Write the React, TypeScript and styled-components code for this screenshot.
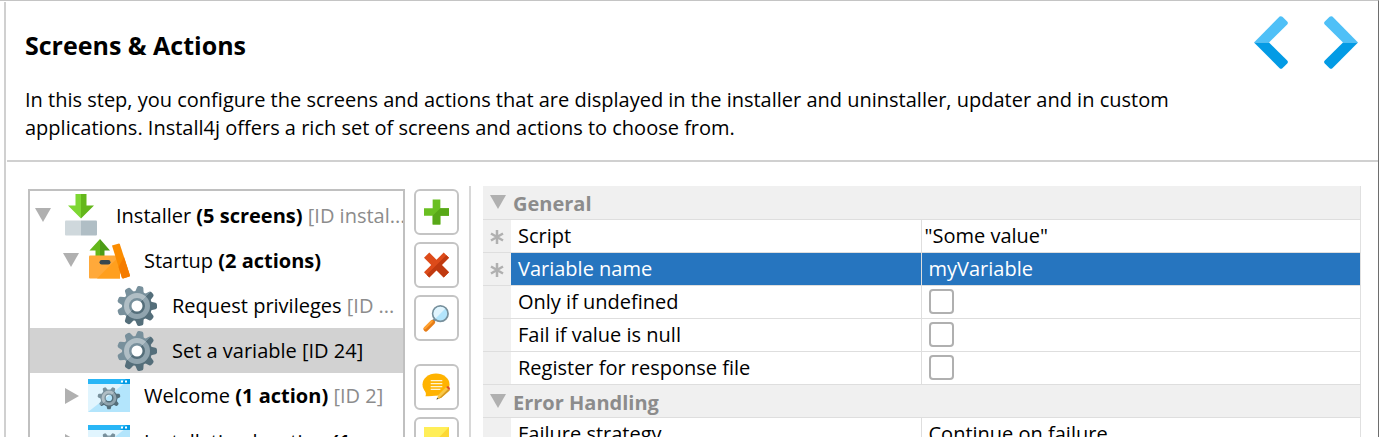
import React from 'react';
import styled, { createGlobalStyle, css } from 'styled-components';

const Global = createGlobalStyle`
  *, *::before, *::after { box-sizing: border-box; }
  body { margin: 0; background: #fff; color: #000; font: 20px/28px "Open Sans", "Segoe UI", sans-serif; }
  button { font: inherit; color: inherit; padding: 0; cursor: pointer; }
`;

const Window = styled.div`
  display: flex;
  flex-direction: column;
  height: 100vh;
  overflow: hidden;
  border-top: 1px solid #c4c4c4;
  border-right: 1px solid #6e6e6e;
  padding-left: 4px;
`;
const Content = styled.main`
  flex: 1;
  min-height: 0;
  display: flex;
  flex-direction: column;
  margin-top: 1px;
  border-left: 2px solid #d0d0d0;
`;
const Header = styled.header`
  display: flex;
  justify-content: space-between;
  align-items: flex-start;
  height: 160px;
  margin-left: 1px;
  padding: 14px 20px 0 18px;
  border-bottom: 2px solid #d0d0d0;
`;
const Intro = styled.div`
  flex: 0 1 1160px;
`;
const Title = styled.h1`
  margin: 15px 0 27px;
  font-size: 25px;
  line-height: 28px;
  font-weight: 700;
`;
const Lead = styled.p`
  margin: 0;
`;
const Steps = styled.nav`
  display: flex;
  gap: 36px;
`;
const StepButton = styled.button`
  display: block;
  height: 54px;
  border: 0;
  background: none;
  svg { display: block; }
`;
const Body = styled.div`
  flex: 1;
  min-height: 0;
  display: flex;
  padding: 24px 17px 0 22px;
`;
const Tree = styled.ul`
  flex: 0 0 377px;
  min-width: 0;
  height: 600px;
  margin: 3px 0 0;
  padding: 2px 0 0;
  list-style: none;
  overflow: hidden;
  border: 2px solid #c0c0c0;
`;
const TreeRow = styled.li<{ $level: number; $selected?: boolean; $screen?: boolean }>`
  display: flex;
  align-items: center;
  height: ${p => (p.$screen ? 46 : 45)}px;
  padding-left: ${p => 4 + p.$level * 28}px;
  white-space: nowrap;
  background: ${p => (p.$selected ? '#d2d2d2' : 'transparent')};
`;
const Toggle = styled.span`
  flex: 0 0 18px;
  height: 18px;
  svg { display: block; }
`;
const NodeIcon = styled.span`
  flex: 0 0 42px;
  height: 42px;
  margin: 0 14px 0 8px;
  svg { display: block; overflow: visible; }
`;
const NodeLabel = styled.span`
  flex: none;
`;
const NodeId = styled.span<{ $strong?: boolean }>`
  color: ${p => (p.$strong ? '#000' : '#8c8c8c')};
`;
const Tools = styled.div`
  flex: 0 0 45px;
  display: flex;
  flex-direction: column;
  gap: 7px;
  margin: 3px 10px 0 9px;
`;
const ToolButton = styled.button<{ $apart?: boolean }>`
  display: grid;
  place-items: center;
  flex: none;
  height: 46px;
  margin-top: ${p => (p.$apart ? 16 : 0)}px;
  background: #fff;
  border: 2px solid #c4c4c4;
  border-radius: 6px;
`;
const Properties = styled.section`
  flex: 1;
  min-width: 0;
  height: 600px;
  padding-left: 12px;
  border-left: 2px solid #d8d8d8;
`;
const Grid = styled.table`
  width: 100%;
  border-collapse: collapse;
  table-layout: fixed;
  border-right: 1px solid #e0e0e0;
`;
const MarkColumn = styled.col`
  width: 28px;
`;
const NameColumn = styled.col`
  width: 410px;
`;
const cell = css`
  height: 33px;
  padding: 0 7px;
  border-bottom: 1px solid #dedede;
  text-align: left;
  font-weight: 400;
  white-space: nowrap;
  line-height: 28px;
`;
const GroupCell = styled.th`
  ${cell}
  padding-left: 6px;
  background: #f0f0f0;
  color: #8c8c8c;
`;
const GroupTitle = styled.span`
  display: flex;
  gap: 6px;
  padding-top: 4px;
  font-weight: 700;
  svg { display: block; margin-top: 4px; }
`;
const MarkCell = styled.td`
  ${cell}
  background: #f0f0f0;
  svg { display: block; margin-top: 2px; }
`;
const NameCell = styled.th<{ $selected?: boolean }>`
  ${cell}
  border-right: 1px solid #dedede;
  ${p => p.$selected && css`background: #2675bf; color: #fff;`}
`;
const ValueCell = styled.td<{ $selected?: boolean; $code?: boolean }>`
  ${cell}
  padding-left: ${p => (p.$code ? 3 : 7)}px;
  ${p => p.$selected && css`background: #2675bf; color: #fff;`}
`;
const Check = styled.input`
  appearance: none;
  display: block;
  width: 25px;
  height: 25px;
  margin: 0;
  background: #fff;
  border: 2px solid #b0b0b0;
  border-radius: 4px;
`;

const Chevron = ({ next }: { next?: boolean }) => (
  <svg width="34" height="54" viewBox="0 0 34 54">
    <g transform={next ? 'translate(34 0) scale(-1 1)' : undefined}>
      <path fill="#4fc0f7" d="M0 26.500 25.600.6Q27 -.4 28.400.8L33.200 5.600Q34.600 7 33.200 8.400L15 26.600Z" />
      <path fill="#039be5" d="M0 26.500H15L33.200 44.600Q34.600 46 33.200 47.400L28.400 52.200Q27 53.400 25.600 52.200Z" />
    </g>
  </svg>
);

const Triangle = ({ open }: { open?: boolean }) => (
  <svg width="18" height="18" viewBox="0 0 18 18">
    <path fill="#b0b0b0" d={open ? 'M1 1H17L9 15Z' : 'M3 1 17 9 3 17Z'} />
  </svg>
);

const GearShape = ({ id, teeth = 9, offset = 10 }: { id: string; teeth?: number; offset?: number }) => (
  <>
    <defs>
      <linearGradient id={id} x1="0" y1="0" x2="42" y2="42" gradientUnits="userSpaceOnUse">
        <stop offset=".5" stopColor="#78909c" />
        <stop offset=".5" stopColor="#546e7a" />
      </linearGradient>
      <linearGradient id={id + 'r'} x1="0" y1="0" x2="42" y2="42" gradientUnits="userSpaceOnUse">
        <stop offset=".5" stopColor="#b0bec5" />
        <stop offset=".5" stopColor="#90a4ae" />
      </linearGradient>
      <mask id={id + 'm'}>
        <g fill="#fff">
          <circle cx="21" cy="21" r="15" />
          {Array.from({ length: teeth }, (_, i) => (
            <path
              key={i}
              d="M16.500 8 17.800 2.500Q18.200 1 19.800 1H22.200Q23.800 1 24.200 2.500L25.500 8Z"
              transform={`rotate(${offset + (i * 360) / teeth} 21 21)`}
            />
          ))}
        </g>
        <circle cx="21" cy="21" r="5.500" fill="#000" />
      </mask>
    </defs>
    <g mask={`url(#${id}m)`}>
      <rect width="42" height="42" fill={`url(#${id})`} />
      <circle cx="21" cy="21" r="10.500" fill="none" stroke={`url(#${id}r)`} strokeWidth="5" />
    </g>
  </>
);

const GearIcon = ({ id }: { id: string }) => (
  <svg width="42" height="42" viewBox="0 0 42 42">
    <circle cx="21" cy="21" r="7" fill="#fff" />
    <GearShape id={id} />
  </svg>
);

const InstallerIcon = () => (
  <svg width="42" height="42" viewBox="0 0 42 42">
    <path fill="#7ed733" d="M15.500 -1H21V23.500L8 10.500H15.500Z" />
    <path fill="#64b71b" d="M21 -1H26.500V10.500H34L21 23.500Z" />
    <path fill="#cfd8dc" d="M6 25.500H21V40.500H6Q5 40.500 5 39.500V26.500Q5 25.500 6 25.500Z" />
    <path fill="#b0bec5" d="M21 25.500H36Q37 25.500 37 26.500V39.500Q37 40.500 36 40.500H21Z" />
  </svg>
);

const StartupIcon = () => (
  <svg width="42" height="42" viewBox="0 0 42 42">
    <path fill="#64b71b" d="M12 -1 1.500 10.500H7.500V17H12Z" />
    <path fill="#4c9c17" d="M12 -1 22 10.500H16.500V17H12Z" />
    <path fill="#ffa93a" d="M2 15.500H32V38.500H2Q1 38.500 1 37.500V16.500Q1 15.500 2 15.500Z" />
    <path fill="#ff9f1e" d="M32 15.500V38.500H9Z" />
    <rect x="11.500" y="20" width="11" height="4.500" rx="2.200" fill="#37474f" />
    <path fill="#fb8c00" d="M24 5.500 31 3.500Q31.500 3.500 31.800 4L42 35.500 41.500 36.500 35 38.500 34 38Z" />
    <path fill="#f57c00" d="M36 17 42 35.500 41.500 36.500 35 38.500 34 38 30.500 27Z" />
  </svg>
);

const ScreenIcon = ({ id }: { id: string }) => (
  <svg width="42" height="42" viewBox="0 0 42 42">
    <path fill="#e1f5fe" d="M0 4H42V37H0Z" />
    <path fill="#b3e5fc" d="M42 4V37H0Z" />
    <path fill="#29b6f6" d="M0 4H42V9H0Z" />
    <path fill="#039be5" d="M38 4H42V9H32Z" />
    <path fill="#fff" d="M33 5.500H35V7.500H33ZM37 5.500H39V7.500H37Z" />
    <g transform="translate(9 11) scale(.57)"><GearShape id={id} teeth={7} offset={180} /></g>
  </svg>
);

const PlusIcon = () => (
  <svg width="25" height="26" viewBox="0 0 26 26">
    <path fill="#6abf22" d="M9 0H17V9H26V17H17V26H9V17H0V9H9Z" />
    <path fill="#58a818" d="M17 9H26V17H17V26H9V17Z" />
  </svg>
);
const DeleteIcon = () => (
  <svg width="25" height="26" viewBox="0 0 26 26">
    <path fill="#dd4b1a" d="M5.500 0 13 7.500 20.500 0 26 5.500 18.500 13 26 20.500 20.500 26 13 18.500 5.500 26 0 20.500 7.500 13 0 5.500Z" />
    <path fill="#c03a10" d="M26 5.500 18.500 13 26 20.500 20.500 26 13 18.500 5.500 26 2.800 23.200 23.200 2.800Z" />
  </svg>
);
const SearchIcon = () => (
  <svg width="27" height="28" viewBox="0 0 28 28">
    <path d="M10 18 13 15" stroke="#78909c" strokeWidth="3" />
    <path d="M3 25.500 10 18.500" stroke="#e67c17" strokeWidth="5" strokeLinecap="round" />
    <path d="M2 24.500 9 17.500" stroke="#ffa030" strokeWidth="2.500" strokeLinecap="round" />
    <circle cx="18" cy="9.500" r="8" fill="#b3e5fc" stroke="#78909c" strokeWidth="1.800" />
    <path fill="#e1f5fe" d="M13 14.500A7 7 0 0 1 23 4.500Z" />
  </svg>
);
const CommentIcon = () => (
  <svg width="29" height="30" viewBox="0 0 30 30">
    <ellipse cx="14.500" cy="12.500" rx="14" ry="11.500" fill="#ffb300" />
    <path fill="#ffb300" d="M2.500 18Q5 22 3.500 24.500 10 25 14 23.500Z" />
    <path d="M9 8.500H21M9 11.500H21M9 14.500H21M9 17.500H19" stroke="#fff3cf" strokeWidth="1.300" />
    <path fill="#f9c846" d="M15 28 17 23 25 15 28.500 18.500 20 26Z" />
    <path fill="#d99a20" d="M18 26 27 17 28.500 18.500 20 26 15 28Z" />
    <path fill="#dd4b2a" d="M25 15 27 14 29 16 28.500 18.500Z" />
    <path fill="#37474f" d="M15 28 15.700 26 17 27.200Z" />
  </svg>
);
const NoteIcon = () => (
  <svg width="25" height="26" viewBox="0 0 25 26">
    <path fill="#ffee58" d="M0 0H25V26H0Z" />
    <path fill="#fdd835" d="M25 0V26H0Z" />
  </svg>
);
const Asterisk = () => (
  <svg width="14" height="14" viewBox="0 0 14 14">
    <path d="M7 0V14M1 3.500 13 10.500M13 3.500 1 10.500" stroke="#b0b0b0" strokeWidth="2.500" />
  </svg>
);

type Prop = { name: string; value?: string; marked?: boolean; selected?: boolean; code?: boolean };
const general: Prop[] = [
  { name: 'Script', value: '"Some value"', marked: true, code: true },
  { name: 'Variable name', value: 'myVariable', marked: true, selected: true },
  { name: 'Only if undefined' },
  { name: 'Fail if value is null' },
  { name: 'Register for response file' },
];
const errors: Prop[] = [{ name: 'Failure strategy', value: 'Continue on failure' }];

const Group = ({ title, items }: { title: string; items: Prop[] }) => (
  <tbody>
    <tr>
      <GroupCell colSpan={3} scope="rowgroup">
        <GroupTitle><Triangle open />{title}</GroupTitle>
      </GroupCell>
    </tr>
    {items.map(p => {
      const id = p.name.toLowerCase().replace(/ /g, '-');
      return (
        <tr key={id}>
          <MarkCell>{p.marked && <Asterisk />}</MarkCell>
          <NameCell scope="row" $selected={p.selected}>
            {p.value ? p.name : <label htmlFor={id}>{p.name}</label>}
          </NameCell>
          <ValueCell $selected={p.selected} $code={p.code}>
            {p.value ?? <Check type="checkbox" id={id} />}
          </ValueCell>
        </tr>
      );
    })}
  </tbody>
);

export default function App() {
  return (
    <Window>
      <Global />
      <Content>
        <Header>
          <Intro>
            <Title>Screens &amp; Actions</Title>
            <Lead>
              In this step, you configure the screens and actions that are displayed in the installer and
              uninstaller, updater and in custom applications. Install4j offers a rich set of screens and
              actions to choose from.
            </Lead>
          </Intro>
          <Steps>
            <StepButton aria-label="Previous step"><Chevron /></StepButton>
            <StepButton aria-label="Next step"><Chevron next /></StepButton>
          </Steps>
        </Header>
        <Body>
          <Tree>
            <TreeRow $level={0}>
              <Toggle><Triangle open /></Toggle>
              <NodeIcon><InstallerIcon /></NodeIcon>
              <NodeLabel>Installer <b>(5 screens)</b> <NodeId>[ID instal...</NodeId></NodeLabel>
            </TreeRow>
            <TreeRow $level={1}>
              <Toggle><Triangle open /></Toggle>
              <NodeIcon><StartupIcon /></NodeIcon>
              <NodeLabel>Startup <b>(2 actions)</b></NodeLabel>
            </TreeRow>
            <TreeRow $level={2}>
              <Toggle />
              <NodeIcon><GearIcon id="g1" /></NodeIcon>
              <NodeLabel>Request privileges <NodeId>[ID ...</NodeId></NodeLabel>
            </TreeRow>
            <TreeRow $level={2} $selected>
              <Toggle />
              <NodeIcon><GearIcon id="g2" /></NodeIcon>
              <NodeLabel>Set a variable <NodeId $strong>[ID 24]</NodeId></NodeLabel>
            </TreeRow>
            <TreeRow $level={1} $screen>
              <Toggle><Triangle /></Toggle>
              <NodeIcon><ScreenIcon id="s1" /></NodeIcon>
              <NodeLabel>Welcome <b>(1 action)</b> <NodeId>[ID 2]</NodeId></NodeLabel>
            </TreeRow>
            <TreeRow $level={1} $screen>
              <Toggle><Triangle /></Toggle>
              <NodeIcon><ScreenIcon id="s2" /></NodeIcon>
              <NodeLabel>Installation location <b>(1 ...</b></NodeLabel>
            </TreeRow>
          </Tree>
          <Tools>
            <ToolButton aria-label="Add"><PlusIcon /></ToolButton>
            <ToolButton aria-label="Delete"><DeleteIcon /></ToolButton>
            <ToolButton aria-label="Search"><SearchIcon /></ToolButton>
            <ToolButton aria-label="Comment" $apart><CommentIcon /></ToolButton>
            <ToolButton aria-label="Note"><NoteIcon /></ToolButton>
          </Tools>
          <Properties>
            <Grid>
              <colgroup>
                <MarkColumn />
                <NameColumn />
                <col />
              </colgroup>
              <Group title="General" items={general} />
              <Group title="Error Handling" items={errors} />
            </Grid>
          </Properties>
        </Body>
      </Content>
    </Window>
  );
}
